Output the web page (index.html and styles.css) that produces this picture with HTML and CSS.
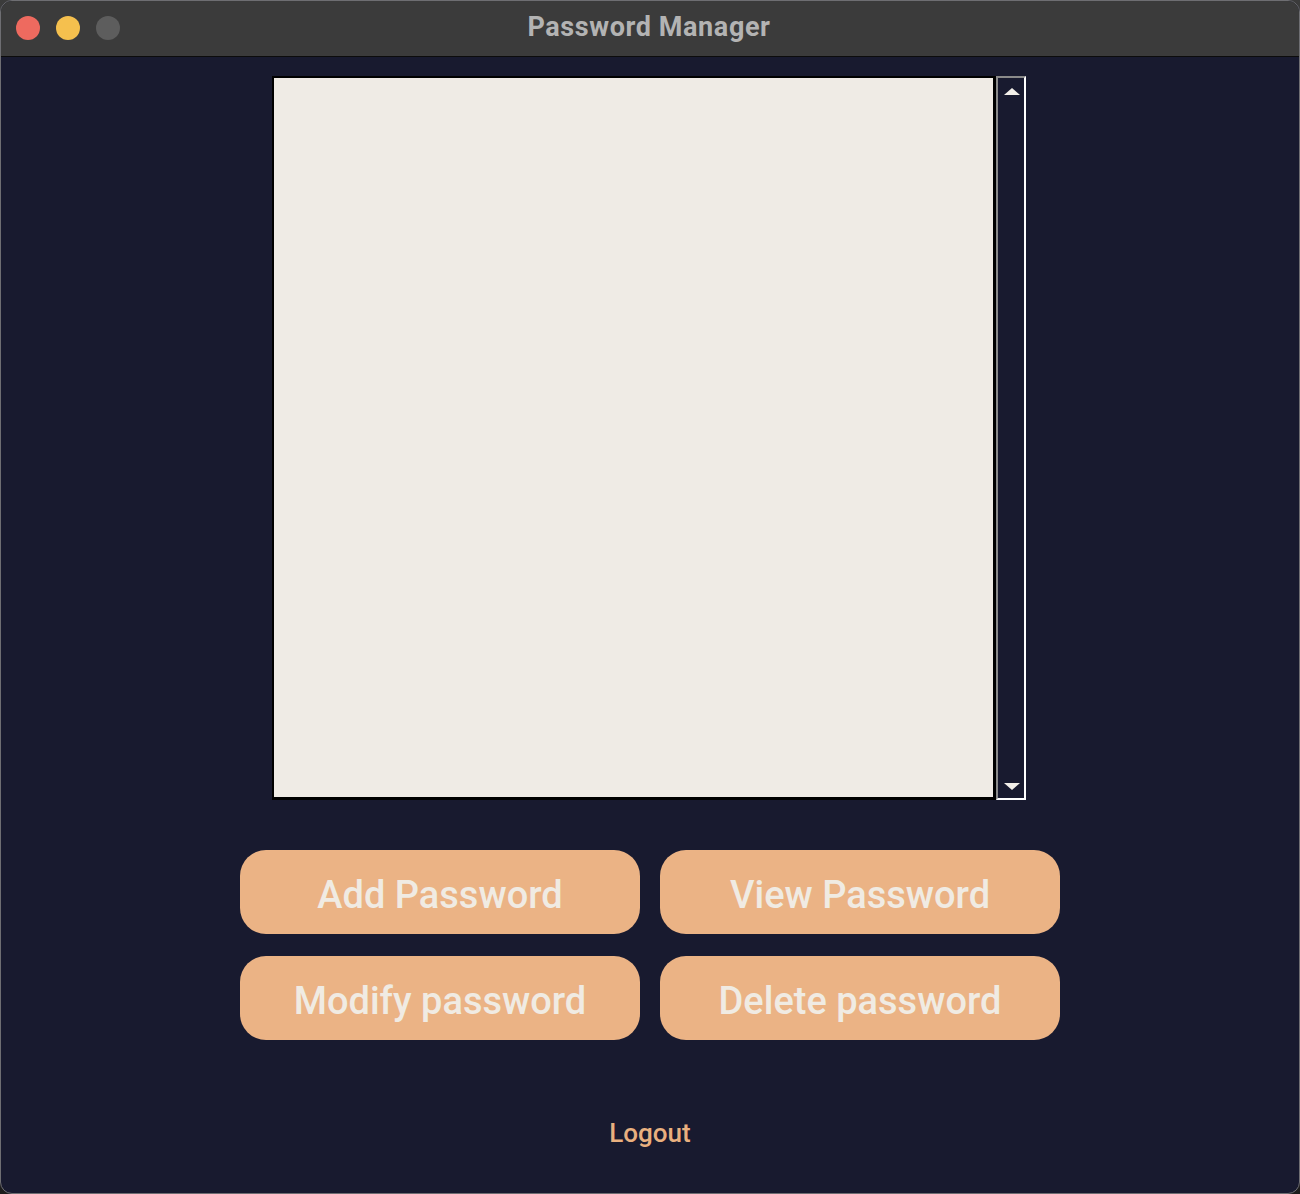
FILE: index.html
```html
<!DOCTYPE html>
<html lang="en">
<head>
<meta charset="utf-8">
<title>Password Manager</title>
<link rel="stylesheet" href="styles.css">
</head>
<body>
<div class="window">
  <header class="titlebar">
    <div class="lights">
      <span class="light red"></span>
      <span class="light yellow"></span>
      <span class="light gray"></span>
    </div>
    <div class="title">Password Manager</div>
  </header>
  <main class="content">
    <div class="listwrap">
      <div class="listbox"></div>
      <div class="scrollbar">
        <span class="arrow up"></span>
        <span class="arrow down"></span>
      </div>
    </div>
    <div class="buttons">
      <button class="btn">Add Password</button>
      <button class="btn">View Password</button>
      <button class="btn">Modify password</button>
      <button class="btn">Delete password</button>
    </div>
    <a class="logout">Logout</a>
  </main>
</div>
</body>
</html>
```

FILE: styles.css
```css
html, body {
  margin: 0;
  padding: 0;
  width: 1300px;
  height: 1194px;
  overflow: hidden;
}
html { background: #2a2a2a; }
body { background: linear-gradient(#3b3b3b 0, #3b3b3b 40px, #1c1c1c 40px); }

.window {
  box-sizing: border-box;
  width: 1300px;
  height: 1194px;
  border-radius: 12px;
  border: 1px solid #6e6e72;
  overflow: hidden;
  background: #181a2f;
  display: flex;
  flex-direction: column;
  font-family: Roboto, "Liberation Sans", sans-serif;
}

.titlebar {
  position: relative;
  height: 55px;
  flex: none;
  background: #3b3b3b;
  border-bottom: 1px solid #0c0c0c;
  display: flex;
  align-items: center;
  justify-content: center;
}
.lights {
  position: absolute;
  left: 15px;
  top: 15px;
  display: flex;
  gap: 16px;
}
.light {
  width: 24px;
  height: 24px;
  border-radius: 50%;
  display: block;
}
.red { background: #ee6a5f; }
.yellow { background: #f5c04e; }
.gray { background: #5d5d5d; }
.title {
  color: #b3b3b3;
  font-weight: 700;
  font-size: 27px;
  letter-spacing: 0.6px;
  margin-left: -2px;
  margin-top: -3px;
}

.content {
  flex: 1;
  display: flex;
  flex-direction: column;
  align-items: center;
}

.listwrap {
  margin-top: 19px;
  margin-left: -2px;
  display: flex;
  height: 724px;
}
.listbox {
  box-sizing: border-box;
  width: 724px;
  height: 724px;
  background: #efebe5;
  border: 2px solid #000;
  border-right-width: 3px;
  border-bottom-width: 3px;
}
.scrollbar {
  box-sizing: border-box;
  width: 30px;
  height: 724px;
  border-top: 2px solid #8a8a8a;
  border-left: 2px solid #8a8a8a;
  border-right: 2px solid #ffffff;
  border-bottom: 2px solid #ffffff;
  display: flex;
  flex-direction: column;
  justify-content: space-between;
  align-items: center;
  padding: 10px 0 8px;
}
.arrow {
  width: 0;
  height: 0;
  border-left: 8px solid transparent;
  border-right: 8px solid transparent;
  display: block;
  margin-left: 2px;
}
.arrow.up { border-bottom: 7px solid #f2efe9; }
.arrow.down { border-top: 7px solid #f2efe9; }

.buttons {
  margin-top: 50px;
  display: grid;
  grid-template-columns: 400px 400px;
  grid-auto-rows: 84px;
  column-gap: 20px;
  row-gap: 22px;
}
.btn {
  border: none;
  border-radius: 26px;
  background: #ebb385;
  color: #f0ebe3;
  font-family: Roboto, "Liberation Sans", sans-serif;
  font-weight: 500;
  font-size: 38px;
  padding: 5px 0 0;
  margin: 0;
  display: flex;
  align-items: center;
  justify-content: center;
}

.logout {
  margin-top: 78px;
  color: #e9b07f;
  font-weight: 500;
  font-size: 26px;
  cursor: pointer;
}
```
